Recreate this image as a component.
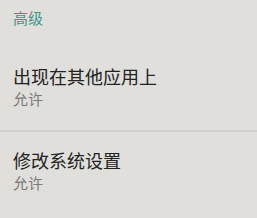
const font = { fontFamily: '"Roboto", "Noto Sans CJK SC", sans-serif' };

function Row({ title, value }: { title: string; value: string }) {
  return (
    <div className="px-[13px] pt-[18px] pb-[20px]">
      <div className="text-[18px] leading-[24px] text-[#222222]">{title}</div>
      <div className="text-[15px] leading-[20px] text-[#7b7b79]">{value}</div>
    </div>
  );
}

export default function App() {
  return (
    <div className="w-[257px] h-[218px] bg-[#e0dfdb] overflow-hidden" style={font}>
      <div className="h-[48px] px-[13px] pt-[9px]">
        <div className="text-[15px] leading-[20px] text-[#3d9886]">高级</div>
      </div>
      <Row title="出现在其他应用上" value="允许" />
      <div className="h-[2px] bg-[#cfceca]" />
      <Row title="修改系统设置" value="允许" />
    </div>
  );
}
